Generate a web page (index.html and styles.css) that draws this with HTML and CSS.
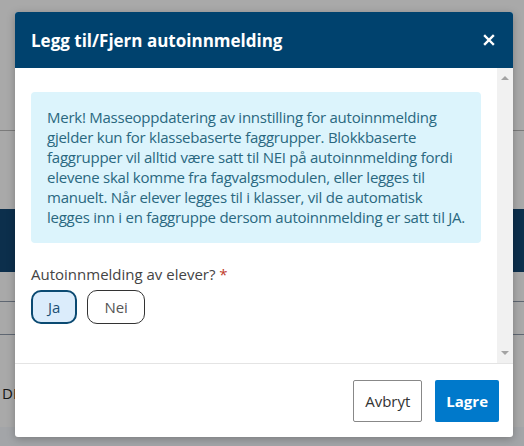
FILE: index.html
```html
<!DOCTYPE html>
<html lang="no">
<head>
    <meta charset="UTF-8">
    <meta name="viewport" content="width=device-width, initial-scale=1.0">
    <title>Legg til/Fjern autoinnmelding</title>
    <link rel="stylesheet" href="styles.css">
</head>
<body>
    <!-- page behind the dialog -->
    <div class="page">
        <div class="page-top"></div>
        <div class="page-row"></div>
        <div class="page-band"></div>
        <div class="page-row gap"></div>
        <div class="page-row short"></div>
        <div class="page-row tall"><span class="page-text">DE</span></div>
        <div class="page-foot"></div>
    </div>
    <div class="backdrop"></div>

    <div class="modal">
        <div class="modal-header">
            <h2>Legg til/Fjern autoinnmelding</h2>
            <button class="close-button" aria-label="Lukk">
                <svg width="12" height="12" viewBox="0 0 12 12">
                    <path d="M2 2 L10 10 M10 2 L2 10" stroke="#fff" stroke-width="2.4" stroke-linecap="square"/>
                </svg>
            </button>
        </div>
        <div class="modal-main">
            <div class="modal-body">
                <div class="alert">
                    Merk! Masseoppdatering av innstilling for autoinnmelding<br>
                    gjelder kun for klassebaserte faggrupper. Blokkbaserte<br>
                    faggrupper vil alltid være satt til NEI på autoinnmelding fordi<br>
                    elevene skal komme fra fagvalgsmodulen, eller legges til<br>
                    manuelt. Når elever legges til i klasser, vil de automatisk<br>
                    legges inn i en faggruppe dersom autoinnmelding er satt til JA.
                </div>
                <label class="field-label">Autoinnmelding av elever? <span class="required">*</span></label>
                <div class="choice-group">
                    <button class="choice selected">Ja</button>
                    <button class="choice">Nei</button>
                </div>
            </div>
            <div class="scrollbar">
                <span class="arrow up"></span>
                <span class="arrow down"></span>
            </div>
        </div>
        <div class="modal-footer">
            <button class="btn btn-secondary">Avbryt</button>
            <button class="btn btn-primary">Lagre</button>
        </div>
    </div>
</body>
</html>
```

FILE: styles.css
```css
body {
    margin: 0;
    font-family: 'Open Sans', 'Noto Sans', sans-serif;
    width: 524px;
    height: 446px;
    overflow: hidden;
    position: relative;
    background-color: #fafafa;
}

.page {
    display: flex;
    flex-direction: column;
    height: 446px;
}

.page-top {
    height: 130px;
    border-bottom: 1px solid #b5b5b5;
}

.page-row {
    height: 78px;
}

.page-band {
    height: 63px;
    background-color: #134670;
}

.page-row.gap {
    height: 29px;
    border-bottom: 1px solid #8c98a8;
}

.page-row.short {
    height: 32px;
    border-bottom: 1px solid #8c98a8;
}

.page-row.tall {
    height: 45px;
    padding-top: 47px;
}

.page-text {
    font-size: 15px;
    color: #222;
    padding-left: 2px;
}

.page-foot {
    flex: 1;
    background-color: #f0f4f8;
}

.backdrop {
    position: absolute;
    inset: 0;
    background-color: rgba(0, 0, 0, 0.32);
}

.modal {
    position: absolute;
    top: 12px;
    left: 15px;
    width: 498px;
    height: 425px;
    background-color: #fff;
    border-radius: 3px;
    box-shadow: 0 2px 8px rgba(0, 0, 0, 0.25);
    display: flex;
    flex-direction: column;
    overflow: hidden;
}

.modal-header {
    height: 56px;
    flex-shrink: 0;
    background-color: #00426e;
    display: flex;
    align-items: center;
    justify-content: space-between;
    padding: 0 18px 0 16px;
}

.modal-header h2 {
    margin: 0;
    color: #fff;
    font-size: 17px;
    font-weight: 700;
}

.close-button {
    background: none;
    border: none;
    padding: 0;
    display: flex;
    cursor: pointer;
}

.modal-main {
    flex: 1;
    display: flex;
    min-height: 0;
}

.modal-body {
    flex: 1;
    padding: 24px 16px 0 16px;
}

.scrollbar {
    width: 16px;
    background-color: #f1f1f1;
    display: flex;
    flex-direction: column;
    justify-content: space-between;
    align-items: center;
    padding: 8px 0;
}

.arrow {
    width: 0;
    height: 0;
    border-left: 4px solid transparent;
    border-right: 4px solid transparent;
}

.arrow.up {
    border-bottom: 4px solid #a3a3a3;
}

.arrow.down {
    border-top: 4px solid #a3a3a3;
}

.alert {
    background-color: #dcf4fc;
    color: #2a6880;
    border-radius: 4px;
    padding: 15px 4px 16px 16px;
    font-size: 15px;
    line-height: 20px;
    letter-spacing: -0.25px;
    white-space: nowrap;
    overflow: hidden;
}

.field-label {
    display: block;
    margin-top: 21px;
    font-size: 15px;
    color: #444;
}

.required {
    color: #c0392b;
}

.choice-group {
    display: flex;
    gap: 10px;
    margin-top: 6px;
}

.choice {
    height: 34px;
    padding: 0 16px;
    font-family: inherit;
    font-size: 15px;
    color: #555;
    background-color: #fff;
    border: 1px solid #333;
    border-radius: 10px;
}

.choice.selected {
    color: #1a4f74;
    background-color: #dbecfb;
    border: 2px solid #0b4a72;
    padding: 0 15px;
}

.modal-footer {
    flex-shrink: 0;
    border-top: 1px solid #e4e4e4;
    display: flex;
    justify-content: flex-end;
    gap: 13px;
    padding: 16px 14px 15px 0;
}

.btn {
    height: 42px;
    padding: 0 11px;
    font-family: inherit;
    font-size: 15px;
    border-radius: 2px;
    cursor: pointer;
}

.btn-secondary {
    background-color: #fff;
    color: #333;
    border: 1px solid #888;
}

.btn-primary {
    background-color: #0079cb;
    color: #fff;
    font-weight: 700;
    border: none;
    padding: 0 11px;
}
```
